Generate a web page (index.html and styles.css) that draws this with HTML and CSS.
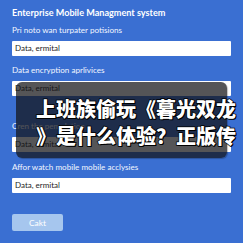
FILE: index.html
```html
<!DOCTYPE html>
<html>
<head>
<meta charset="utf-8">
<link rel="stylesheet" href="styles.css">
</head>
<body>
<main class="page">
  <h1 class="title">Enterprise Mobile Managment system</h1>
  <div class="field field-first">
    <label class="label">Pri noto wan turpater potisions</label>
    <div class="input">Data, ermital</div>
  </div>
  <div class="field">
    <label class="label">Data encryption aprlivices</label>
    <div class="input">Data, ermital</div>
  </div>
  <div class="field field-gap">
    <label class="label">Cren the pemulation</label>
    <div class="input">Data, ermital</div>
  </div>
  <div class="field field-last">
    <label class="label">Affor watch mobile mobile acclysies</label>
    <div class="input">Data, ermital</div>
  </div>
  <button class="btn">Cakt</button>
</main>
<div class="caption">
  <div class="caption-box"></div>
  <p class="caption-text">上班族偷玩《暮光双龙<br>》是什么体验？正版传</p>
</div>
</body>
</html>
```

FILE: styles.css
```css
html, body {
  margin: 0;
  padding: 0;
}
body {
  width: 243px;
  height: 243px;
  overflow: hidden;
  background: #3a6fd2;
  font-family: Lato, "Noto Sans", sans-serif;
  color: #ffffff;
  position: relative;
}
.page {
  padding: 6px 12px 0 12px;
  display: flex;
  flex-direction: column;
}
.title {
  margin: 0;
  font-size: 9.1px;
  font-weight: 700;
  line-height: 14px;
}
.field {
  display: flex;
  flex-direction: column;
  margin-top: 9px;
}
.field-first {
  margin-top: 5px;
}
.field-gap {
  margin-top: 25px;
}
.field-last {
  margin-top: 10px;
}
.label {
  font-size: 8.1px;
  line-height: 11px;
  color: #f2f6ff;
}
.input {
  margin-top: 5px;
  height: 15px;
  background: #ffffff;
  border-radius: 1px;
  color: #1d1d1d;
  font-size: 8px;
  line-height: 15px;
  padding-left: 3px;
}
.btn {
  margin-top: 21px;
  width: 51px;
  height: 17px;
  border: none;
  border-radius: 2px;
  background: #a6c6ee;
  color: #ffffff;
  font-family: Lato, "Noto Sans", sans-serif;
  font-size: 8.4px;
  padding: 0;
}
.caption {
  position: absolute;
  left: 0;
  top: 0;
  width: 243px;
  height: 243px;
  pointer-events: none;
}
.caption-box {
  position: absolute;
  left: 16px;
  top: 82px;
  width: 211px;
  height: 76px;
  border-radius: 6px;
  background: rgba(20, 20, 22, 0.72);
  box-shadow: 1px 1px 1px rgba(0, 0, 0, 0.25);
}
.caption-text {
  position: absolute;
  left: 36px;
  top: 95px;
  margin: 0;
  white-space: nowrap;
  font-family: "Noto Sans CJK SC", sans-serif;
  font-weight: 900;
  font-size: 20px;
  line-height: 27px;
  color: #ffffff;
  -webkit-text-stroke: 1.4px #000;
  paint-order: stroke fill;
  text-shadow: 0 0 1px #000, 1px 1px 0 #000;
}
```
